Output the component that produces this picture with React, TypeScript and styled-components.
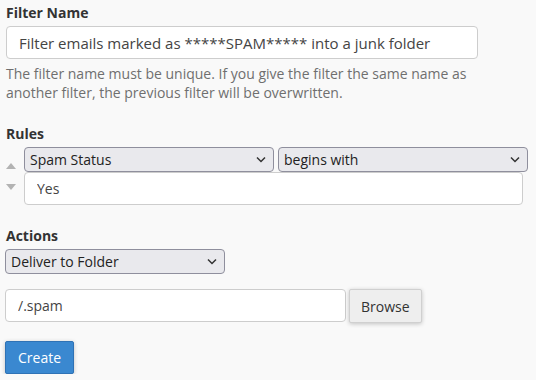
import styled, { createGlobalStyle } from 'styled-components';

const GlobalStyle = createGlobalStyle`
  html, body {
    margin: 0;
    background: #f9f9f9;
    font-family: 'Open Sans', 'Liberation Sans', sans-serif;
    font-size: 14px;
    color: #333;
  }
`;

const Page = styled.form`
  padding: 3px 8px 0 5px;
  display: flex;
  flex-direction: column;
`;

//섹션
const Section = styled.div<{ $gap?: number }>`
  display: flex;
  flex-direction: column;
  margin-bottom: ${({ $gap }) => $gap ?? 0}px;
`;

const Label = styled.label`
  font-weight: 700;
  line-height: 20px;
  color: #333;
  margin-bottom: 3px;
  padding-left: 1px;
`;

const TextInput = styled.input<{ $width: number; $size?: number }>`
  box-sizing: border-box;
  display: block;
  width: ${({ $width }) => $width}px;
  height: 33px;
  padding: 0 12px;
  border: 1px solid #cdcdcd;
  border-radius: 4px;
  background: #fff;
  font-family: inherit;
  font-size: ${({ $size }) => $size ?? 14}px;
  color: #444;
  outline: none;
`;

const Help = styled.p`
  margin: 5px 0 0;
  line-height: 19px;
  color: #6f6f6f;
  padding-left: 1px;
`;

//셀렉트 스타일
const SelectWrap = styled.div<{ $width: number }>`
  position: relative;
  width: ${({ $width }) => $width}px;
  height: 25px;
`;

const Select = styled.select`
  appearance: none;
  display: block;
  box-sizing: border-box;
  width: 100%;
  height: 25px;
  padding: 0 24px 0 5px;
  border: 1px solid #8f8f9d;
  border-radius: 4px;
  background: #e9e9ed;
  font-family: inherit;
  font-size: 14px;
  color: #222;
  outline: none;
`;

const Chevron = styled.svg`
  position: absolute;
  right: 8px;
  top: 9px;
  pointer-events: none;
`;

const RuleRow = styled.div`
  display: flex;
  gap: 8px;
`;

const Arrows = styled.div`
  width: 12px;
  display: flex;
  flex-direction: column;
  align-items: center;
  padding-top: 16px;
  gap: 15px;
`;

const RuleBody = styled.div`
  display: flex;
  flex-direction: column;
`;

const SelectRow = styled.div`
  display: flex;
  gap: 4px;
`;

const PathRow = styled.div`
  display: flex;
  gap: 3px;
  margin-top: 15px;
`;

const Button = styled.button<{ $primary?: boolean }>`
  box-sizing: border-box;
  height: ${({ $primary }) => ($primary ? 33 : 34)}px;
  padding: 0 ${({ $primary }) => ($primary ? 12 : 11)}px;
  border: 1px solid ${({ $primary }) => ($primary ? '#2f72b5' : '#d0d0d0')};
  border-radius: 2px;
  background: ${({ $primary }) => ($primary ? '#3a88d0' : '#eeeeee')};
  color: ${({ $primary }) => ($primary ? '#fff' : '#333')};
  font-family: inherit;
  font-size: 14px;
  box-shadow: 0 1px 4px rgba(0, 0, 0, 0.22);
  cursor: pointer;
`;

const CreateRow = styled.div`
  margin-top: 18px;
`;

const Triangle = ({ up }: { up?: boolean }) => (
  <svg width="10" height="6" viewBox="0 0 10 6">
    <path d={up ? 'M0 6 L5 0 L10 6 Z' : 'M0 0 L5 6 L10 0 Z'} fill="#b3b3b3" />
  </svg>
);

const Dropdown = ({ width, value }: { width: number; value: string }) => (
  <SelectWrap $width={width}>
    <Select defaultValue={value}>
      <option>{value}</option>
    </Select>
    <Chevron width="10" height="7" viewBox="0 0 10 7">
      <path d="M1 1.5 L5 5.5 L9 1.5" fill="none" stroke="#333" strokeWidth="1.5" />
    </Chevron>
  </SelectWrap>
);

export default function App() {
  return (
    <>
      <GlobalStyle />
      <Page onSubmit={(e) => e.preventDefault()}>
        <Section $gap={22}>
          <Label>Filter Name</Label>
          <TextInput
            $width={472}
            $size={15}
            style={{ marginLeft: 1 }}
            defaultValue="Filter emails marked as *****SPAM***** into a junk folder"
          />
          <Help>
            The filter name must be unique. If you give the filter the same name as
            <br />
            another filter, the previous filter will be overwritten.
          </Help>
        </Section>

        <Section $gap={21}>
          <Label>Rules</Label>
          <RuleRow>
            <Arrows>
              <Triangle up />
              <Triangle />
            </Arrows>
            <RuleBody>
              <SelectRow>
                <Dropdown width={250} value="Spam Status" />
                <Dropdown width={250} value="begins with" />
              </SelectRow>
              <TextInput $width={499} defaultValue="Yes" />
            </RuleBody>
          </RuleRow>
        </Section>

        <Section>
          <Label>Actions</Label>
          <Dropdown width={220} value="Deliver to Folder" />
          <PathRow>
            <TextInput $width={341} defaultValue="/.spam" />
            <Button type="button">Browse</Button>
          </PathRow>
          <CreateRow>
            <Button $primary type="submit">
              Create
            </Button>
          </CreateRow>
        </Section>
      </Page>
    </>
  );
}
